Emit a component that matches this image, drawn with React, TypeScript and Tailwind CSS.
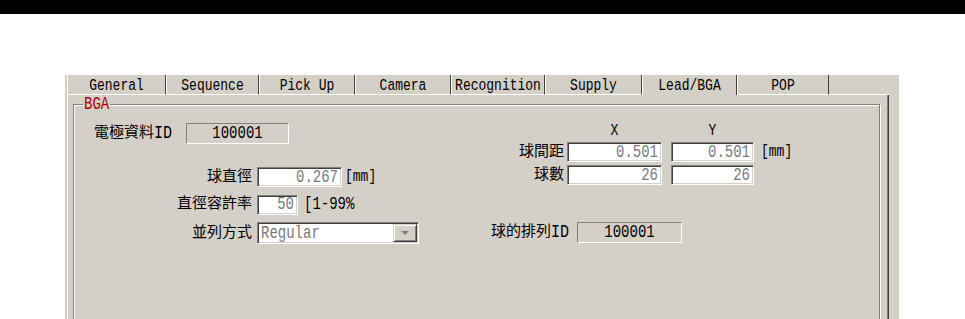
import React from 'react';

const font = "font-['Liberation_Mono','Noto_Sans_CJK_TC',monospace]";

const tabs = [
  { label: 'General', w: 'w-[99px]' },
  { label: 'Sequence', w: 'w-[93px]' },
  { label: 'Pick Up', w: 'w-[96px]' },
  { label: 'Camera', w: 'w-[96px]' },
  { label: 'Recognition', w: 'w-[94px]' },
  { label: 'Supply', w: 'w-[97px]' },
  { label: 'Lead/BGA', w: 'w-[95px]', active: true },
  { label: 'POP', w: 'w-[92px]' },
];

// tall narrow latin text, like the old bitmap font
const Tall = ({ children }: { children: React.ReactNode }) => (
  <span className="inline-block scale-y-[1.25]">{children}</span>
);

// sunken white edit box
const Field = ({ value, w }: { value: string; w: string }) => (
  <div
    className={`${w} h-[20px] bg-white flex items-center justify-end pr-[3px] text-[14px] text-[#7a7a7a] border border-t-[#808080] border-l-[#808080] border-b-white border-r-white shadow-[inset_1px_1px_0_#404040,inset_-1px_-1px_0_#d4d0c8]`}
  >
    <Tall>{value}</Tall>
  </div>
);

// read-only static box
const Static = ({ value, w }: { value: string; w: string }) => (
  <div
    className={`${w} h-[21px] flex items-center justify-center text-[14px] text-black border border-t-[#808080] border-l-[#808080] border-b-white border-r-white`}
  >
    <Tall>{value}</Tall>
  </div>
);

const Label = ({ children, w }: { children: React.ReactNode; w: string }) => (
  <div className={`${w} text-right text-[15px] leading-none text-black`}>{children}</div>
);

export default function App() {
  return (
    <div className={`w-[965px] h-[319px] overflow-hidden bg-white ${font}`}>
      <div className="h-[14px] bg-black" />
      <div className="h-[61px]" />

      <div className="ml-[65px] w-[834px] h-[260px] bg-[#d4d0c8] flex flex-col">
        {/* tabs */}
        <div className="flex h-[20px] ml-[2px] w-[822px]">
          {tabs.map((t) => (
            <div
              key={t.label}
              className={`${t.w} flex justify-center text-[13px] text-black border-l border-l-white border-r border-r-[#404040] ${
                t.active ? 'items-start pt-[1px]' : 'items-center pt-[3px] border-b border-b-white'
              }`}
            >
              <Tall>{t.label}</Tall>
            </div>
          ))}
          <div className="flex-1 border-b border-b-white" />
        </div>

        {/* tab page frame */}
        <div className="flex-1 ml-[2px] w-[822px] border-l border-l-white border-r border-r-[#404040] shadow-[inset_-1px_0_0_#808080] flex flex-col">
          <fieldset className="mt-[2px] ml-[5px] mr-[8px] flex-1 border border-[#808080] shadow-[inset_1px_1px_0_white,1px_1px_0_white] p-0 m-0">
            <legend className="ml-[9px] px-[1px] bg-[#d4d0c8] text-[14px] leading-[14px] text-[#b00000]">
              <Tall>BGA</Tall>
            </legend>

            <div className="flex">
              {/* left column */}
              <div className="w-[395px] flex flex-col">
                <div className="mt-[12px] flex items-center h-[21px]">
                  <div className="ml-[20px] w-[92px] text-[15px] leading-none">
                    電極資料<Tall>ID</Tall>
                  </div>
                  <Static value="100001" w="w-[103px]" />
                </div>

                <div className="mt-[23px] flex items-center">
                  <Label w="w-[178px]">球直徑</Label>
                  <div className="ml-[5px]">
                    <Field value="0.267" w="w-[85px]" />
                  </div>
                  <span className="ml-[3px] text-[13px]">
                    <Tall>[mm]</Tall>
                  </span>
                </div>

                <div className="mt-[7px] flex items-center">
                  <Label w="w-[178px]">直徑容許率</Label>
                  <div className="ml-[5px]">
                    <Field value="50" w="w-[41px]" />
                  </div>
                  <span className="ml-[6px] text-[14px]">
                    <Tall>[1-99%</Tall>
                  </span>
                </div>

                <div className="mt-[7px] flex items-center">
                  <Label w="w-[178px]">並列方式</Label>
                  <div className="ml-[5px] w-[162px] h-[22px] bg-white flex border border-t-[#808080] border-l-[#808080] border-b-white border-r-white shadow-[inset_1px_1px_0_#404040,inset_-1px_-1px_0_#d4d0c8]">
                    <div className="flex-1 flex items-center pl-[3px] text-[14px] text-[#7a7a7a]">
                      <Tall>Regular</Tall>
                    </div>
                    <div className="w-[24px] m-[1px] bg-[#d4d0c8] flex items-center justify-center border border-t-[#d4d0c8] border-l-[#d4d0c8] border-b-[#404040] border-r-[#404040] shadow-[inset_1px_1px_0_white,inset_-1px_-1px_0_#808080]">
                      <svg width="8" height="4" viewBox="0 0 8 4">
                        <path d="M0 0h8L4 4z" fill="#808080" />
                      </svg>
                    </div>
                  </div>
                </div>
              </div>

              {/* right column */}
              <div className="flex flex-col">
                <div className="mt-[12px] flex h-[14px] items-center text-[13px] leading-none">
                  <div className="w-[98px]" />
                  <div className="w-[95px] text-center">
                    <Tall>X</Tall>
                  </div>
                  <div className="w-[9px]" />
                  <div className="w-[83px] text-center">
                    <Tall>Y</Tall>
                  </div>
                </div>

                <div className="mt-[5px] flex items-center">
                  <Label w="w-[95px]">球間距</Label>
                  <div className="ml-[3px]">
                    <Field value="0.501" w="w-[95px]" />
                  </div>
                  <div className="ml-[9px]">
                    <Field value="0.501" w="w-[83px]" />
                  </div>
                  <span className="ml-[7px] text-[13px]">
                    <Tall>[mm]</Tall>
                  </span>
                </div>

                <div className="mt-[3px] flex items-center">
                  <Label w="w-[95px]">球數</Label>
                  <div className="ml-[3px]">
                    <Field value="26" w="w-[95px]" />
                  </div>
                  <div className="ml-[9px]">
                    <Field value="26" w="w-[83px]" />
                  </div>
                </div>

                <div className="mt-[37px] flex items-center">
                  <Label w="w-[100px]">
                    球的排列<Tall>ID</Tall>
                  </Label>
                  <div className="ml-[8px]">
                    <Static value="100001" w="w-[105px]" />
                  </div>
                </div>
              </div>
            </div>
          </fieldset>
        </div>
      </div>
    </div>
  );
}
